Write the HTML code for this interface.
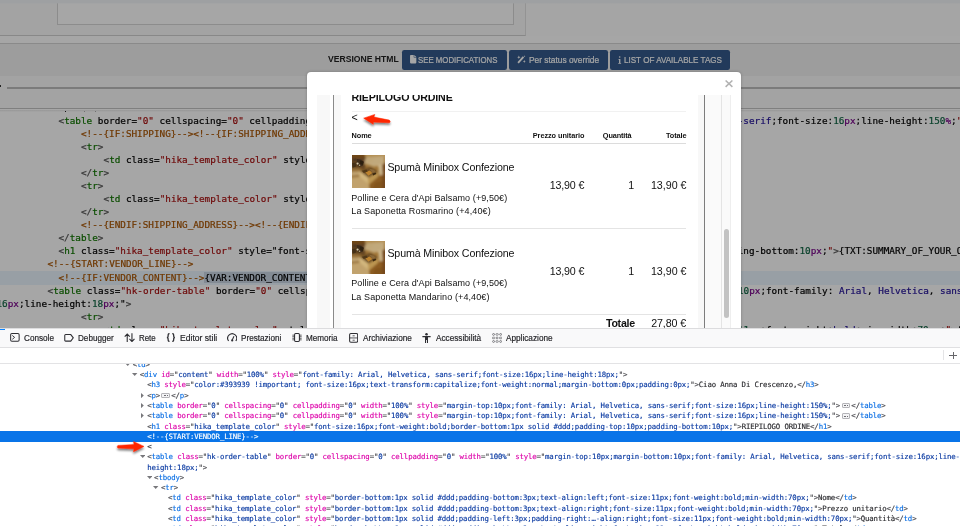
<!DOCTYPE html>
<html lang="it"><head><meta charset="utf-8"><title>Email template preview</title>
<style>
html,body{margin:0;padding:0;}
body{width:960px;height:526px;overflow:hidden;position:relative;background:#fff;font-family:"Liberation Sans","DejaVu Sans",sans-serif;}
i{font-style:normal;}
.abs{position:absolute;}
.t{position:absolute;white-space:pre;line-height:1;}

.btn{top:50px;height:19.7px;background:#355a8c;border-radius:2.2px;}
.bl{top:6.1px;font-size:8.7px;color:#fff;}
.cm{-webkit-text-stroke:.2px;font-family:"DejaVu Sans Mono","Liberation Mono",monospace;font-size:9.33px;line-height:13.067px;height:13.067px;color:#000;letter-spacing:-0.0041px;}
.cb{color:#555;} .ct{color:#117700;} .cs{color:#aa1111;} .cc{color:#aa5500;}
.cn{color:#116644;} .cu{color:#770088;} .cv{color:#221199;} .ca{color:#221199;}
.sel{background:#c9d6e4;}

.ff{-webkit-text-stroke:.15px;font-family:"DejaVu Sans Mono","Liberation Mono",monospace;font-size:7.33px;line-height:10.267px;height:10.267px;color:#2a2a2e;letter-spacing:-0.1360px;}
.fb{color:#45454a;} .ft{color:#0b6fe4;} .fa{color:#dd00a9;} .fv{color:#0a3aa2;}
.bd{display:inline-block;width:6.4px;height:3.4px;border:.7px solid #b4b4b8;border-radius:1px;margin:0 1.450px;vertical-align:-0.4px;background-color:#f4f4f6;background-image:linear-gradient(#4a4a4f,#4a4a4f),linear-gradient(#4a4a4f,#4a4a4f),linear-gradient(#4a4a4f,#4a4a4f);background-size:.9px .9px;background-position:1.300px 1.300px,2.750px 1.300px,4.200px 1.300px;background-repeat:no-repeat;letter-spacing:0;}

</style></head><body>
<div id="root" style="position:absolute;left:0;top:0;width:960px;height:526px;will-change:transform;">
<div class="abs" id="pg" style="left:0;top:0;width:960px;height:328px;overflow:hidden;background:#fff;">
<div class="abs" style="left:0;top:3px;width:960px;height:40px;background:#fdfdfd;"></div>
<div class="abs" style="left:0;top:3px;width:525px;height:32px;background:#fbfbfb;border-right:1px solid #e2e2e2;border-bottom:1.4px solid #d2d2d2;"></div>
<div class="abs" style="left:57px;top:0px;width:454.5px;height:24px;background:#fff;border:1px solid #d8d8d8;border-top:none;"></div>
<div class="abs" style="left:0;top:0;width:960px;height:4px;background:linear-gradient(#f3f6f9 0,#f3f6f9 2.600px,rgba(243,246,249,0) 4px);"></div>
<div class="abs" style="left:0;top:35.8px;width:960px;height:7.2px;background:#fff;"></div>
<div class="abs" style="left:0;top:43px;width:960px;height:32.7px;background:#f2f2f2;border-top:1.2px solid #d4d4d4;box-sizing:border-box;"></div>
<div class="abs" style="left:0;top:75.7px;width:960px;height:33px;background:#fbfbfb;"></div>
<div class="abs" style="left:6.5px;top:87.2px;width:960px;height:1.7px;background:#bebebe;"></div>
<div class="abs" style="left:0;top:85px;width:1.2px;height:1.5px;background:#333;"></div>
<div class="abs" style="left:0;top:107.9px;width:960px;height:1.6px;background:#c4c4c4;"></div>
<div class="abs" style="left:0;top:109.5px;width:960px;height:2px;background:linear-gradient(#e8e8e8,#fff);"></div>
<div class="t" style="left:327.67px;top:54.00px;font-size:9.5px;font-weight:bold;color:#222;transform:scaleX(0.9058);transform-origin:0 0;">VERSIONE HTML</div>
<div class="abs btn" style="left:402.20px;width:104.40px;"><svg class="abs" style="left:8.1px;top:5.3px" width="6.4" height="8.4" viewBox="0 0 12 16"><path d="M0 1.5A1.5 1.5 0 0 1 1.5 0H7v4.2c0 .5.4.8.8.8H12v9.5a1.5 1.5 0 0 1-1.5 1.5h-9A1.5 1.5 0 0 1 0 14.5z M8 0l4 4H8z" fill="#fff"/></svg><div class="t" style="left:16.28px;top:6.00px;font-size:9.3px;color:#fff;transform:scaleX(0.8417);transform-origin:0 0;-webkit-text-stroke:.2px #fff;">SEE MODIFICATIONS</div></div>
<div class="abs btn" style="left:509.20px;width:98.60px;"><svg class="abs" style="left:8.0px;top:5.1px" width="9.2" height="8.7" viewBox="0 0 18 17"><path d="M0.8 14.3L11.3 2.6L14 5L3.400 16.600z" fill="#fff"/><path d="M3.60 1.10L4.52 3.48L6.90 4.40L4.52 5.32L3.60 7.70L2.68 5.32L0.30 4.40L2.68 3.48zM14.30 9.60L15.14 11.76L17.30 12.60L15.14 13.44L14.30 15.60L13.46 13.44L11.30 12.60L13.46 11.76zM14.60 0.40L15.16 1.84L16.60 2.40L15.16 2.96L14.60 4.40L14.04 2.96L12.60 2.40L14.04 1.84z" fill="#fff"/></svg><div class="t" style="left:19.63px;top:6.00px;font-size:9.3px;color:#fff;transform:scaleX(0.8994);transform-origin:0 0;-webkit-text-stroke:.2px #fff;">Per status override</div></div>
<div class="abs btn" style="left:610.30px;width:119.50px;"><svg class="abs" style="left:8.0px;top:5.8px" width="3.4" height="8.2" viewBox="0 0 6 14"><circle cx="3" cy="1.500" r="1.400" fill="#fff"/><path d="M.8 5h3.400v7h1.300v1.600H.5V12h1.400V6.600H.8z" fill="#fff"/></svg><div class="t" style="left:13.30px;top:6.00px;font-size:9.3px;color:#fff;transform:scaleX(0.8680);transform-origin:0 0;-webkit-text-stroke:.2px #fff;">LIST OF AVAILABLE TAGS</div></div>
<div class="abs" style="left:0;top:271.2px;width:960px;height:13.6px;background:#eaf5fd;"></div>
<div class="abs" style="left:65.3px;top:111.2px;width:1px;height:1px;background:#222;opacity:1"></div>
<div class="abs" style="left:84.4px;top:111.2px;width:1px;height:1px;background:#222;opacity:.35"></div>
<div class="abs" style="left:95.4px;top:111.2px;width:1px;height:1px;background:#222;opacity:.35"></div>
<div class="t cm" style="left:58.50px;top:113.70px;"><i class="cb">&lt;</i><i class="ct">table</i> border=<i class="cs">"0"</i> cellspacing=<i class="cs">"0"</i> cellpadding=<i class="cs">"0"</i> width=<i class="cs">"100%"</i> style="margin-top:<i class="cn">10</i><i class="cu">px</i>;font-family: <i class="cv">Arial</i>, <i class="cv">Helvetica</i>, <i class="cv">sans-serif</i>;font-size:<i class="cn">16</i><i class="cu">px</i>;line-height:<i class="cn">150</i><i class="cu">%</i>;<i class="cs">"</i><i class="cb">&gt;</i></div>
<div class="t cm" style="left:81.00px;top:126.77px;"><i class="cc">&lt;!--{IF:SHIPPING}--&gt;</i><i class="cc">&lt;!--{IF:SHIPPING_ADDRESS}--&gt;</i></div>
<div class="t cm" style="left:81.00px;top:139.83px;"><i class="cb">&lt;</i><i class="ct">tr</i><i class="cb">&gt;</i></div>
<div class="t cm" style="left:103.50px;top:152.90px;"><i class="cb">&lt;</i><i class="ct">td</i> class=<i class="cs">"hika_template_color"</i> style="font-size:<i class="cn">12</i><i class="cu">px</i>;font-weight:<i class="cv">bold</i>;<i class="cs">"</i><i class="cb">&gt;</i>{TXT:SHIPPING_ADDRESS}<i class="cb">&lt;/</i><i class="ct">td</i><i class="cb">&gt;</i></div>
<div class="t cm" style="left:81.00px;top:165.97px;"><i class="cb">&lt;/</i><i class="ct">tr</i><i class="cb">&gt;</i></div>
<div class="t cm" style="left:81.00px;top:179.03px;"><i class="cb">&lt;</i><i class="ct">tr</i><i class="cb">&gt;</i></div>
<div class="t cm" style="left:103.50px;top:192.10px;"><i class="cb">&lt;</i><i class="ct">td</i> class=<i class="cs">"hika_template_color"</i> style="font-size:<i class="cn">12</i><i class="cu">px</i>;<i class="cs">"</i><i class="cb">&gt;</i>{VAR:SHIPPING_ADDRESS}<i class="cb">&lt;/</i><i class="ct">td</i><i class="cb">&gt;</i></div>
<div class="t cm" style="left:81.00px;top:205.17px;"><i class="cb">&lt;/</i><i class="ct">tr</i><i class="cb">&gt;</i></div>
<div class="t cm" style="left:81.00px;top:218.24px;"><i class="cc">&lt;!--{ENDIF:SHIPPING_ADDRESS}--&gt;</i><i class="cc">&lt;!--{ENDIF:SHIPPING}--&gt;</i></div>
<div class="t cm" style="left:58.50px;top:231.30px;"><i class="cb">&lt;/</i><i class="ct">table</i><i class="cb">&gt;</i></div>
<div class="t cm" style="left:58.50px;top:244.37px;"><i class="cb">&lt;</i><i class="ct">h1</i> class=<i class="cs">"hika_template_color"</i> style="font-size:<i class="cn">16</i><i class="cu">px</i>;font-weight:<i class="cv">bold</i>;border-bottom:<i class="cn">1</i><i class="cu">px</i> <i class="cv">solid</i> <i class="ca">#ddd</i>;padding-top:<i class="cn">10</i><i class="cu">px</i>;padding-bottom:<i class="cn">10</i><i class="cu">px</i>;<i class="cs">"</i><i class="cb">&gt;</i>{TXT:SUMMARY_OF_YOUR_ORDER}<i class="cb">&lt;/</i><i class="ct">h1</i><i class="cb">&gt;</i></div>
<div class="t cm" style="left:47.50px;top:257.44px;"><i class="cc">&lt;!--{START:VENDOR_LINE}--&gt;</i></div>
<div class="t cm" style="left:58.50px;top:270.50px;"><i class="cc">&lt;!--{IF:VENDOR_CONTENT}--&gt;</i><i class="sel">{VAR:VENDOR_CONTENT}</i><i class="cc">&lt;!--{ENDIF:VENDOR_CONTENT}--&gt;</i></div>
<div class="t cm" style="left:47.50px;top:283.57px;"><i class="cb">&lt;</i><i class="ct">table</i> class=<i class="cs">"hk-order-table"</i> border=<i class="cs">"0"</i> cellspacing=<i class="cs">"0"</i> cellpadding=<i class="cs">"0"</i> width=<i class="cs">"100%"</i> style="margin-top:<i class="cn">10</i><i class="cu">px</i>;margin-bottom:<i class="cn">10</i><i class="cu">px</i>;font-family: <i class="cv">Arial</i>, <i class="cv">Helvetica</i>, <i class="cv">sans-serif</i>;font-size:</div>
<div class="t cm" style="left:-3.50px;top:296.64px;"><i class="cn">16</i><i class="cu">px</i>;line-height:<i class="cn">18</i><i class="cu">px</i>;"<i class="cb">&gt;</i></div>
<div class="t cm" style="left:81.00px;top:309.70px;"><i class="cb">&lt;</i><i class="ct">tr</i><i class="cb">&gt;</i></div>
<div class="t cm" style="left:103.50px;top:322.77px;"><i class="cb">&lt;</i><i class="ct">td</i> class=<i class="cs">"hika_template_color"</i> style="border-bottom:<i class="cn">1</i><i class="cu">px</i> <i class="cv">solid</i> <i class="ca">#ddd</i>;padding-bottom:<i class="cn">3</i><i class="cu">px</i>;text-align:<i class="cv">left</i>;font-size:<i class="cn">11</i><i class="cu">px</i>;font-weight:<i class="cv">bold</i>;min-width:<i class="cn">70</i><i class="cu">px</i>;<i class="cs">"</i><i class="cb">&gt;</i>{TXT:PRODUCT_NAME}<i class="cb">&lt;/</i><i class="ct">td</i><i class="cb">&gt;</i></div>
<div class="abs" style="left:0;top:0;width:960px;height:328px;background:rgba(0,0,0,0.35);"></div>
</div>
<div class="abs" style="left:307px;top:72px;width:434px;height:262px;background:#fff;border-radius:4px 4px 0 0;box-shadow:0 0 3px rgba(0,0,0,.25);"></div>
<svg class="abs" style="left:725.4px;top:80.4px" width="8" height="7.4" viewBox="0 0 8 7.4"><path d="M0.6 0.5L7.4 6.9M7.4 0.5L0.6 6.9" stroke="#b2b2b2" stroke-width="1.500" fill="none"/></svg>
<div class="abs" id="ifr" style="left:317px;top:95px;width:414px;height:233px;overflow:hidden;background:#fff;">
<div class="abs" style="left:0.00px;top:0.00px;width:13.20px;height:233.00px;background:#f8f8f8;"></div>
<div class="abs" style="left:16.10px;top:0.00px;width:1.00px;height:233.00px;background:#8a8a8a;"></div>
<div class="abs" style="left:17.30px;top:0.00px;width:6.40px;height:233.00px;background:#f8f8f8;"></div>
<div class="abs" style="left:381.00px;top:0.00px;width:6.00px;height:233.00px;background:#f8f8f8;"></div>
<div class="abs" style="left:387.10px;top:0.00px;width:1.00px;height:233.00px;background:#7d7d7d;"></div>
<div class="abs" style="left:388.20px;top:0.00px;width:25.80px;height:233.00px;background:#fafafa;"></div>
<div class="abs" style="left:404.40px;top:0.00px;width:0.80px;height:233.00px;background:#e4e4e4;"></div>
<div class="abs" style="left:413.30px;top:0.00px;width:0.70px;height:233.00px;background:#eeeeee;"></div>
<div class="abs" style="left:406.90px;top:133.70px;width:5.30px;height:89.70px;background:#c2c2c2;border-radius:2.7px;"></div>
<div class="t" style="left:34.45px;top:-3.00px;font-size:10.67px;font-weight:bold;color:#111;letter-spacing:-0.153px;">RIEPILOGO ORDINE</div>
<div class="abs" style="left:35.00px;top:15.80px;width:334.30px;height:0.80px;background:#f1f1f1;"></div>
<div class="t" style="left:34.60px;top:17.00px;font-size:10.67px;color:#111;">&lt;</div>
<div class="t" style="left:34.50px;top:37.00px;font-size:7.33px;font-weight:bold;color:#111;letter-spacing:-0.067px;">Nome</div>
<div class="t" style="left:215.80px;top:37.00px;font-size:7.33px;font-weight:bold;color:#111;letter-spacing:-0.064px;">Prezzo unitario</div>
<div class="t" style="left:285.85px;top:37.00px;font-size:7.33px;font-weight:bold;color:#111;letter-spacing:-0.143px;">Quantità</div>
<div class="t" style="left:349.00px;top:37.00px;font-size:7.33px;font-weight:bold;color:#111;letter-spacing:-0.080px;">Totale</div>
<div class="abs" style="left:35.00px;top:48.00px;width:334.30px;height:0.90px;background:#dcdcdc;"></div>
<svg class="abs" style="left:35.00px;top:60.00px" width="32.9" height="32.9" viewBox="0 0 100 100" preserveAspectRatio="none">
<defs><filter id="bl1" x="-10%" y="-10%" width="120%" height="120%"><feGaussianBlur stdDeviation="2.700"/></filter>
<filter id="bs1" x="-10%" y="-10%" width="120%" height="120%"><feGaussianBlur stdDeviation="2.000"/></filter>
<clipPath id="cp1"><rect width="100" height="100"/></clipPath></defs>
<g clip-path="url(#cp1)"><rect width="100" height="100" fill="#a67a38"/>
<g filter="url(#bl1)">
<rect x="-10" y="-10" width="60" height="22" fill="#6e4518"/>
<rect x="40" y="-10" width="70" height="16" fill="#bd9a5a"/>
<rect x="-10" y="8" width="50" height="34" fill="#5b4020"/>
<rect x="-10" y="40" width="34" height="36" fill="#9c763c"/>
<path d="M-10 52L24 50L26 60L-10 64z" fill="#cdb382"/>
<path d="M-10 70L24 66L52 90L56 110L-10 110z" fill="#cfb27c"/>
<path d="M52 90L82 62L110 58L110 110L54 110z" fill="#905f24"/>
<path d="M70 85L110 75L110 110L60 110z" fill="#84551e"/>
<path d="M91 24L110 22L110 110L93 110z" fill="#74471a"/>
<path d="M37 26L43 7L98 3L98 26L89 31L67 36L50 30z" fill="#cfba8e"/>
<path d="M43 8L70 5L60 22L40 27z" fill="#cdb88a"/>
<path d="M79 30L91 28L93 60L84 62z" fill="#dccaa2"/>
<path d="M22 48L56 36L80 52L50 69z" fill="#6b4d26"/>
<path d="M22 48L50 69L51 90L23 66z" fill="#e3ca90"/>
<path d="M50 69L80 52L79 66L51 90z" fill="#c9a45c"/>
</g>
<g filter="url(#bs1)">
<path d="M14 12L28 14L36 21L33 33L23 36L14 29z" fill="#33261a"/><path d="M24 16L35 20L33 30L25 28z" fill="#1e160c"/>
<path d="M0 25L11 22L13 35L2 39z" fill="#3b2c18"/><path d="M4 12L12 10L13 18L5 20z" fill="#4a3520"/>
<circle cx="17" cy="26" r="3.400" fill="#e6dec4"/><circle cx="23" cy="31" r="2.400" fill="#cfc4a0"/>
<path d="M40 52L54 47L62 55L50 63z" fill="#c98c30"/>
<path d="M52 42L66 44L72 52L62 55z" fill="#8d6c3c"/>
<path d="M30 48L44 44L48 50L36 55z" fill="#4a3418"/>
<path d="M62 56L72 53L74 58L64 62z" fill="#2e2010"/>
</g><rect width="100" height="100" fill="#7a4e1c" opacity=".16"/></g></svg>
<div class="t" style="left:70.40px;top:67.00px;font-size:10.67px;color:#111;letter-spacing:-0.141px;">Spumà Minibox Confezione</div>
<div class="t" style="left:34.25px;top:99.00px;font-size:9.0px;color:#111;letter-spacing:0.095px;">Polline e Cera d'Api Balsamo (+9,50€)</div>
<div class="t" style="left:34.25px;top:112.00px;font-size:9.0px;color:#111;letter-spacing:0.121px;">La Saponetta Rosmarino (+4,40€)</div>
<div class="t" style="left:232.65px;top:85.00px;font-size:10.67px;color:#111;letter-spacing:-0.142px;">13,90 €</div>
<div class="t" style="left:311.20px;top:85.00px;font-size:10.67px;color:#111;">1</div>
<div class="t" style="left:333.95px;top:85.00px;font-size:10.67px;color:#111;letter-spacing:-0.008px;">13,90 €</div>
<div class="abs" style="left:35.00px;top:132.90px;width:334.30px;height:0.80px;background:#e4e4e4;"></div>
<svg class="abs" style="left:35.00px;top:146.00px" width="32.9" height="32.9" viewBox="0 0 100 100" preserveAspectRatio="none">
<defs><filter id="bl2" x="-10%" y="-10%" width="120%" height="120%"><feGaussianBlur stdDeviation="2.700"/></filter>
<filter id="bs2" x="-10%" y="-10%" width="120%" height="120%"><feGaussianBlur stdDeviation="2.000"/></filter>
<clipPath id="cp2"><rect width="100" height="100"/></clipPath></defs>
<g clip-path="url(#cp2)"><rect width="100" height="100" fill="#a67a38"/>
<g filter="url(#bl2)">
<rect x="-10" y="-10" width="60" height="22" fill="#6e4518"/>
<rect x="40" y="-10" width="70" height="16" fill="#bd9a5a"/>
<rect x="-10" y="8" width="50" height="34" fill="#5b4020"/>
<rect x="-10" y="40" width="34" height="36" fill="#9c763c"/>
<path d="M-10 52L24 50L26 60L-10 64z" fill="#cdb382"/>
<path d="M-10 70L24 66L52 90L56 110L-10 110z" fill="#cfb27c"/>
<path d="M52 90L82 62L110 58L110 110L54 110z" fill="#905f24"/>
<path d="M70 85L110 75L110 110L60 110z" fill="#84551e"/>
<path d="M91 24L110 22L110 110L93 110z" fill="#74471a"/>
<path d="M37 26L43 7L98 3L98 26L89 31L67 36L50 30z" fill="#cfba8e"/>
<path d="M43 8L70 5L60 22L40 27z" fill="#cdb88a"/>
<path d="M79 30L91 28L93 60L84 62z" fill="#dccaa2"/>
<path d="M22 48L56 36L80 52L50 69z" fill="#6b4d26"/>
<path d="M22 48L50 69L51 90L23 66z" fill="#e3ca90"/>
<path d="M50 69L80 52L79 66L51 90z" fill="#c9a45c"/>
</g>
<g filter="url(#bs2)">
<path d="M14 12L28 14L36 21L33 33L23 36L14 29z" fill="#33261a"/><path d="M24 16L35 20L33 30L25 28z" fill="#1e160c"/>
<path d="M0 25L11 22L13 35L2 39z" fill="#3b2c18"/><path d="M4 12L12 10L13 18L5 20z" fill="#4a3520"/>
<circle cx="17" cy="26" r="3.400" fill="#e6dec4"/><circle cx="23" cy="31" r="2.400" fill="#cfc4a0"/>
<path d="M40 52L54 47L62 55L50 63z" fill="#c98c30"/>
<path d="M52 42L66 44L72 52L62 55z" fill="#8d6c3c"/>
<path d="M30 48L44 44L48 50L36 55z" fill="#4a3418"/>
<path d="M62 56L72 53L74 58L64 62z" fill="#2e2010"/>
</g><rect width="100" height="100" fill="#7a4e1c" opacity=".16"/></g></svg>
<div class="t" style="left:70.40px;top:153.00px;font-size:10.67px;color:#111;letter-spacing:-0.141px;">Spumà Minibox Confezione</div>
<div class="t" style="left:34.25px;top:184.00px;font-size:9.0px;color:#111;letter-spacing:0.095px;">Polline e Cera d'Api Balsamo (+9,50€)</div>
<div class="t" style="left:34.25px;top:198.00px;font-size:9.0px;color:#111;letter-spacing:0.112px;">La Saponetta Mandarino (+4,40€)</div>
<div class="t" style="left:232.65px;top:171.00px;font-size:10.67px;color:#111;letter-spacing:-0.142px;">13,90 €</div>
<div class="t" style="left:311.20px;top:171.00px;font-size:10.67px;color:#111;">1</div>
<div class="t" style="left:333.95px;top:171.00px;font-size:10.67px;color:#111;letter-spacing:-0.008px;">13,90 €</div>
<div class="abs" style="left:35.00px;top:218.90px;width:334.30px;height:0.80px;background:#e4e4e4;"></div>
<div class="t" style="left:288.95px;top:223.00px;font-size:10.67px;font-weight:bold;color:#111;letter-spacing:-0.270px;">Totale</div>
<div class="t" style="left:334.20px;top:223.00px;font-size:10.67px;color:#111;letter-spacing:-0.100px;">27,80 €</div>
</div>
<div class="abs" id="dev" style="left:0;top:328px;width:960px;height:198px;background:#fff;overflow:hidden;">
<div class="abs" style="left:0.00px;top:0.00px;width:960.00px;height:19.60px;background:#f9f9fa;border-top:1px solid #dcdcde;border-bottom:1px solid #e0e0e2;box-sizing:border-box;"></div>
<div class="abs" style="left:0.00px;top:0.60px;width:4.60px;height:1.10px;background:#0a84ff;"></div>
<svg class="abs" style="left:10.00px;top:5.20px" width="9.80" height="8.90" viewBox="0 0 14 13"><rect x="0.8" y="0.8" width="12.4" height="11.2" rx="1.800" fill="none" stroke="#2e2e33" stroke-width="1.500"/><path d="M3.200 3.600L6.600 6.400L3.200 9.200" fill="none" stroke="#2e2e33" stroke-width="1.400"/></svg>
<svg class="abs" style="left:64.00px;top:6.00px" width="10.20" height="7.70" viewBox="0 0 14 11"><path d="M2 .8H9.400L13 5.500L9.400 10.200H2A1.200 1.200 0 0 1 .8 9V2A1.200 1.200 0 0 1 2 .8z" fill="none" stroke="#2e2e33" stroke-width="1.500"/></svg>
<svg class="abs" style="left:124.00px;top:4.80px" width="10.60" height="9.60" viewBox="0 0 14 13"><path d="M4.200 12.500V1.500M.8 5L4.200 1.400L7.600 5M10.600 .5V11.500M7.200 8L10.600 11.600L14 8" fill="none" stroke="#2e2e33" stroke-width="1.500"/></svg>
<svg class="abs" style="left:166.40px;top:5.10px" width="9.80" height="9.00" viewBox="0 0 14 13"><path d="M5 .8C3.400 .8 3 1.500 3 2.800V4.800C3 5.800 2.400 6.500 1.200 6.500C2.400 6.500 3 7.200 3 8.200V10.200C3 11.500 3.400 12.200 5 12.200M9 .8C10.600 .8 11 1.500 11 2.800V4.800C11 5.800 11.600 6.500 12.800 6.500C11.600 6.500 11 7.200 11 8.200V10.200C11 11.500 10.600 12.200 9 12.200" fill="none" stroke="#2e2e33" stroke-width="1.850"/></svg>
<svg class="abs" style="left:226.80px;top:4.80px" width="10.40" height="9.00" viewBox="0 0 14 12"><path d="M2.200 10.600A6 6 0 1 1 11.800 10.600" fill="none" stroke="#2e2e33" stroke-width="1.500"/><path d="M7 9.300L9.400 4.400" stroke="#2e2e33" stroke-width="1.400"/><circle cx="7" cy="10" r="1.500" fill="#2e2e33"/></svg>
<svg class="abs" style="left:292.00px;top:5.40px" width="10.00" height="9.00" viewBox="0 0 14 12.600"><rect x="3.600" y=".8" width="6.800" height="11" rx="1.500" fill="none" stroke="#2e2e33" stroke-width="1.500"/><path d="M.6 3H2.600M.6 5.200H2.600M.6 7.400H2.600M.6 9.600H2.600M11.400 3H13.400M11.400 5.200H13.400M11.400 7.400H13.400M11.400 9.600H13.400" stroke="#2e2e33" stroke-width="1.250"/></svg>
<svg class="abs" style="left:348.90px;top:4.80px" width="9.30" height="9.90" viewBox="0 0 13 14"><rect x=".8" y=".8" width="11.400" height="12.400" rx="1.800" fill="none" stroke="#2e2e33" stroke-width="1.500"/><path d="M.8 7H12.200" stroke="#2e2e33" stroke-width="1.150"/><path d="M5 4H8M5 10.200H8" stroke="#2e2e33" stroke-width="1.100"/></svg>
<svg class="abs" style="left:421.80px;top:4.80px" width="9.00" height="9.90" viewBox="0 0 12 13.200"><circle cx="6" cy="1.700" r="1.700" fill="#2e2e33"/><path d="M.5 4H11.500V5.800H8V13.200H6.600V9.200H5.400V13.200H4V5.800H.5z" fill="#2e2e33"/></svg>
<svg class="abs" style="left:491.80px;top:4.80px" width="10.20" height="9.90" viewBox="0 0 14 14"><circle cx="2.0" cy="2.0" r="1.350" fill="none" stroke="#5a5a5f" stroke-width="1"/><rect x="5.3" y="0.9" width="3.400" height="2.200" rx=".8" fill="none" stroke="#5a5a5f" stroke-width=".9"/><circle cx="12.0" cy="2.0" r="1.350" fill="none" stroke="#5a5a5f" stroke-width="1"/><rect x="0.3" y="5.9" width="3.400" height="2.200" rx=".8" fill="none" stroke="#5a5a5f" stroke-width=".9"/><circle cx="7.0" cy="7.0" r="1.350" fill="none" stroke="#5a5a5f" stroke-width="1"/><rect x="10.3" y="5.9" width="3.400" height="2.200" rx=".8" fill="none" stroke="#5a5a5f" stroke-width=".9"/><circle cx="2.0" cy="12.0" r="1.350" fill="none" stroke="#5a5a5f" stroke-width="1"/><rect x="5.3" y="10.9" width="3.400" height="2.200" rx=".8" fill="none" stroke="#5a5a5f" stroke-width=".9"/><circle cx="12.0" cy="12.0" r="1.350" fill="none" stroke="#5a5a5f" stroke-width="1"/></svg>
<div class="t" style="left:23.91px;top:6.00px;font-size:8.4px;color:#242428;transform:scaleX(0.9748);transform-origin:0 0;-webkit-text-stroke:.18px #242428;">Console</div>
<div class="t" style="left:78.37px;top:6.00px;font-size:8.4px;color:#242428;transform:scaleX(0.9694);transform-origin:0 0;-webkit-text-stroke:.18px #242428;">Debugger</div>
<div class="t" style="left:138.79px;top:6.00px;font-size:8.4px;color:#242428;transform:scaleX(0.9455);transform-origin:0 0;-webkit-text-stroke:.18px #242428;">Rete</div>
<div class="t" style="left:179.73px;top:6.00px;font-size:8.4px;color:#242428;transform:scaleX(1.0257);transform-origin:0 0;-webkit-text-stroke:.18px #242428;">Editor stili</div>
<div class="t" style="left:241.02px;top:6.00px;font-size:8.4px;color:#242428;transform:scaleX(0.9727);transform-origin:0 0;-webkit-text-stroke:.18px #242428;">Prestazioni</div>
<div class="t" style="left:305.67px;top:6.00px;font-size:8.4px;color:#242428;transform:scaleX(0.9701);transform-origin:0 0;-webkit-text-stroke:.18px #242428;">Memoria</div>
<div class="t" style="left:362.50px;top:6.00px;font-size:8.4px;color:#242428;transform:scaleX(0.9818);transform-origin:0 0;-webkit-text-stroke:.18px #242428;">Archiviazione</div>
<div class="t" style="left:436.00px;top:6.00px;font-size:8.4px;color:#242428;transform:scaleX(0.9804);transform-origin:0 0;-webkit-text-stroke:.18px #242428;">Accessibilità</div>
<div class="t" style="left:506.40px;top:6.00px;font-size:8.4px;color:#242428;transform:scaleX(0.9809);transform-origin:0 0;-webkit-text-stroke:.18px #242428;">Applicazione</div>
<div class="abs" style="left:0.00px;top:35.00px;width:960.00px;height:0.80px;background:#e3e3e5;"></div>
<div class="abs" style="left:943.10px;top:22.00px;width:0.80px;height:10.40px;background:#e4e4e6;"></div>
<div class="abs" style="left:949.20px;top:27.00px;width:7.90px;height:0.90px;background:#66666a;"></div>
<div class="abs" style="left:952.75px;top:23.70px;width:0.90px;height:7.30px;background:#66666a;"></div>
<div class="abs" style="left:0;top:35.80px;width:960px;height:162.20px;overflow:hidden;">
<svg class="abs" style="left:125.10px;top:-0.72px" width="5.4" height="3.000" viewBox="0 0 5.400 3"><path d="M0 0H5.400L2.700 3z" fill="#77777b"/></svg>
<div class="t ff" style="left:132.70px;top:-3.85px;"><i class="fb">&lt;</i><i class="ft">td</i><i class="fb">&gt;</i></div>
<svg class="abs" style="left:132.20px;top:9.55px" width="5.4" height="3.000" viewBox="0 0 5.400 3"><path d="M0 0H5.400L2.700 3z" fill="#77777b"/></svg>
<div class="t ff" style="left:139.80px;top:6.42px;"><i class="fb">&lt;</i><i class="ft">div</i> <i class="fa">id</i><i class="fb">="</i><i class="fv">content</i><i class="fb">"</i> <i class="fa">width</i><i class="fb">="</i><i class="fv">100%</i><i class="fb">"</i> <i class="fa">style</i><i class="fb">="</i><i class="fv">font-family: Arial, Helvetica, sans-serif;font-size:16px;line-height:18px;</i><i class="fb">"</i><i class="fb">&gt;</i></div>
<div class="t ff" style="left:147.20px;top:16.68px;"><i class="fb">&lt;</i><i class="ft">h3</i> <i class="fa">style</i><i class="fb">="</i><i class="fv">color:#393939 !important; font-size:16px;text-transform:capitalize;font-weight:normal;margin-bottom:0px;padding:0px;</i><i class="fb">"</i><i class="fb">&gt;</i>Ciao Anna Di Crescenzo,<i class="fb">&lt;/</i><i class="ft">h3</i><i class="fb">&gt;</i></div>
<svg class="abs" style="left:141.20px;top:29.08px" width="2.800" height="5.200" viewBox="0 0 2.800 5.200"><path d="M0 0V5.200L2.800 2.600z" fill="#77777b"/></svg>
<div class="t ff" style="left:147.20px;top:26.95px;"><i class="fb">&lt;</i><i class="ft">p</i><i class="fb">&gt;</i><i class="bd"></i><i class="fb">&lt;/</i><i class="ft">p</i><i class="fb">&gt;</i></div>
<svg class="abs" style="left:141.20px;top:39.35px" width="2.800" height="5.200" viewBox="0 0 2.800 5.200"><path d="M0 0V5.200L2.800 2.600z" fill="#77777b"/></svg>
<div class="t ff" style="left:147.20px;top:37.22px;"><i class="fb">&lt;</i><i class="ft">table</i> <i class="fa">border</i><i class="fb">="</i><i class="fv">0</i><i class="fb">"</i> <i class="fa">cellspacing</i><i class="fb">="</i><i class="fv">0</i><i class="fb">"</i> <i class="fa">cellpadding</i><i class="fb">="</i><i class="fv">0</i><i class="fb">"</i> <i class="fa">width</i><i class="fb">="</i><i class="fv">100%</i><i class="fb">"</i> <i class="fa">style</i><i class="fb">="</i><i class="fv">margin-top:10px;font-family: Arial, Helvetica, sans-serif;font-size:16px;line-height:150%;</i><i class="fb">"</i><i class="fb">&gt;</i><i class="bd"></i><i class="fb">&lt;/</i><i class="ft">table</i><i class="fb">&gt;</i></div>
<svg class="abs" style="left:141.20px;top:49.62px" width="2.800" height="5.200" viewBox="0 0 2.800 5.200"><path d="M0 0V5.200L2.800 2.600z" fill="#77777b"/></svg>
<div class="t ff" style="left:147.20px;top:47.48px;"><i class="fb">&lt;</i><i class="ft">table</i> <i class="fa">border</i><i class="fb">="</i><i class="fv">0</i><i class="fb">"</i> <i class="fa">cellspacing</i><i class="fb">="</i><i class="fv">0</i><i class="fb">"</i> <i class="fa">cellpadding</i><i class="fb">="</i><i class="fv">0</i><i class="fb">"</i> <i class="fa">width</i><i class="fb">="</i><i class="fv">100%</i><i class="fb">"</i> <i class="fa">style</i><i class="fb">="</i><i class="fv">margin-top:10px;font-family: Arial, Helvetica, sans-serif;font-size:16px;line-height:150%;</i><i class="fb">"</i><i class="fb">&gt;</i><i class="bd"></i><i class="fb">&lt;/</i><i class="ft">table</i><i class="fb">&gt;</i></div>
<div class="t ff" style="left:147.20px;top:57.75px;"><i class="fb">&lt;</i><i class="ft">h1</i> <i class="fa">class</i><i class="fb">="</i><i class="fv">hika_template_color</i><i class="fb">"</i> <i class="fa">style</i><i class="fb">="</i><i class="fv">font-size:16px;font-weight:bold;border-bottom:1px solid #ddd;padding-top:10px;padding-bottom:10px;</i><i class="fb">"</i><i class="fb">&gt;</i>RIEPILOGO ORDINE<i class="fb">&lt;/</i><i class="ft">h1</i><i class="fb">&gt;</i></div>
<div class="abs" style="left:0;top:67.50px;width:960px;height:10.30px;background:#0974e8;"></div>
<div class="t ff" style="left:147.20px;top:68.02px;color:#fff;">&lt;!--{START:VENDOR_LINE}--&gt;</div>
<div class="t ff" style="left:147.20px;top:78.29px;">&lt;</div>
<svg class="abs" style="left:139.60px;top:91.69px" width="5.4" height="3.000" viewBox="0 0 5.400 3"><path d="M0 0H5.400L2.700 3z" fill="#77777b"/></svg>
<div class="t ff" style="left:147.20px;top:88.55px;"><i class="fb">&lt;</i><i class="ft">table</i> <i class="fa">class</i><i class="fb">="</i><i class="fv">hk-order-table</i><i class="fb">"</i> <i class="fa">border</i><i class="fb">="</i><i class="fv">0</i><i class="fb">"</i> <i class="fa">cellspacing</i><i class="fb">="</i><i class="fv">0</i><i class="fb">"</i> <i class="fa">cellpadding</i><i class="fb">="</i><i class="fv">0</i><i class="fb">"</i> <i class="fa">width</i><i class="fb">="</i><i class="fv">100%</i><i class="fb">"</i> <i class="fa">style</i><i class="fb">="</i><i class="fv">margin-top:10px;margin-bottom:10px;font-family: Arial, Helvetica, sans-serif;font-size:16px;line-</i></div>
<div class="t ff" style="left:147.20px;top:98.82px;"><i class="fv">height:18px;</i><i class="fb">"&gt;</i></div>
<svg class="abs" style="left:146.50px;top:112.22px" width="5.4" height="3.000" viewBox="0 0 5.400 3"><path d="M0 0H5.400L2.700 3z" fill="#77777b"/></svg>
<div class="t ff" style="left:154.10px;top:109.09px;"><i class="fb">&lt;</i><i class="ft">tbody</i><i class="fb">&gt;</i></div>
<svg class="abs" style="left:153.40px;top:122.49px" width="5.4" height="3.000" viewBox="0 0 5.400 3"><path d="M0 0H5.400L2.700 3z" fill="#77777b"/></svg>
<div class="t ff" style="left:161.00px;top:119.35px;"><i class="fb">&lt;</i><i class="ft">tr</i><i class="fb">&gt;</i></div>
<div class="t ff" style="left:168.00px;top:129.62px;"><i class="fb">&lt;</i><i class="ft">td</i> <i class="fa">class</i><i class="fb">="</i><i class="fv">hika_template_color</i><i class="fb">"</i> <i class="fa">style</i><i class="fb">="</i><i class="fv">border-bottom:1px solid #ddd;padding-bottom:3px;text-align:left;font-size:11px;font-weight:bold;min-width:70px;</i><i class="fb">"</i><i class="fb">&gt;</i>Nome<i class="fb">&lt;/</i><i class="ft">td</i><i class="fb">&gt;</i></div>
<div class="t ff" style="left:168.00px;top:139.89px;"><i class="fb">&lt;</i><i class="ft">td</i> <i class="fa">class</i><i class="fb">="</i><i class="fv">hika_template_color</i><i class="fb">"</i> <i class="fa">style</i><i class="fb">="</i><i class="fv">border-bottom:1px solid #ddd;padding-bottom:3px;text-align:right;font-size:11px;font-weight:bold;min-width:70px;</i><i class="fb">"</i><i class="fb">&gt;</i>Prezzo unitario<i class="fb">&lt;/</i><i class="ft">td</i><i class="fb">&gt;</i></div>
<div class="t ff" style="left:168.00px;top:150.15px;"><i class="fb">&lt;</i><i class="ft">td</i> <i class="fa">class</i><i class="fb">="</i><i class="fv">hika_template_color</i><i class="fb">"</i> <i class="fa">style</i><i class="fb">="</i><i class="fv">border-bottom:1px solid #ddd;padding-left:3px;padding-right:…-align:right;font-size:11px;font-weight:bold;min-width:70px;</i><i class="fb">"</i><i class="fb">&gt;</i>Quantità<i class="fb">&lt;/</i><i class="ft">td</i><i class="fb">&gt;</i></div>
<div class="t ff" style="left:168.00px;top:160.42px;"><i class="fb">&lt;</i><i class="ft">td</i> <i class="fa">class</i><i class="fb">="</i><i class="fv">hika_template_color</i><i class="fb">"</i> <i class="fa">style</i><i class="fb">="</i><i class="fv">border-bottom:1px solid #ddd;padding-bottom:3px;text-align:right;font-size:11px;font-weight:bold;min-width:70px;</i><i class="fb">"</i><i class="fb">&gt;</i>Totale<i class="fb">&lt;/</i><i class="ft">td</i><i class="fb">&gt;</i></div>
</div>
</div>
<svg class="abs" style="left:0;top:0;pointer-events:none" width="960" height="526" viewBox="0 0 960 526">
<defs><filter id="ash" x="-30%" y="-50%" width="160%" height="220%"><feGaussianBlur in="SourceAlpha" stdDeviation="1.100"/><feOffset dx="0.300" dy="1.600"/><feComponentTransfer><feFuncA type="linear" slope=".5"/></feComponentTransfer><feMerge><feMergeNode/><feMergeNode in="SourceGraphic"/></feMerge></filter></defs>
<g filter="url(#ash)" fill="#ff2600" stroke="#ff2600" stroke-width=".5" stroke-linejoin="round">
<path d="M363.700 118.150L374.800 114.400L373.900 117.100L389.300 120.100Q391 121.500 389.600 122.700L373.300 122.100L373.300 124.300z"/>
<path d="M144 446.400L133.500 441.500L134 444.500L117.900 445.400Q116.500 446.800 117.900 448.100L134 448.800L133.500 451.700z"/>
</g></svg>
</div>
</body></html>
